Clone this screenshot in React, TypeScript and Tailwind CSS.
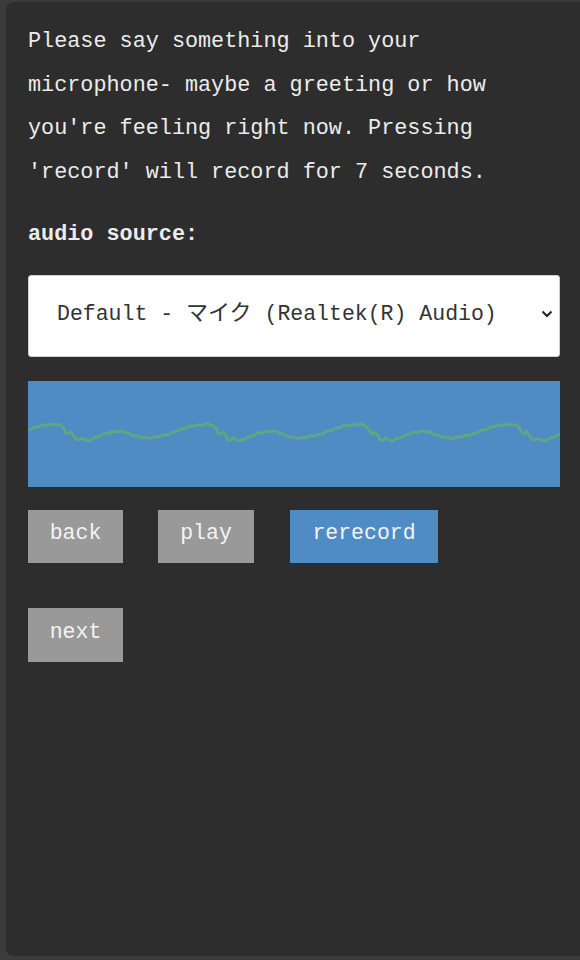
import React from "react";

const keys: [number, number][] = [
  [0, 425], [6, 424], [12, 426], [15, 430], [17, 435], [20, 432], [22, 433],
  [25, 438], [27, 441], [30, 439], [32, 438], [35, 440], [38, 441], [42, 439],
  [47, 437], [52, 435], [57, 433], [63, 432], [70, 431], [75, 432], [80, 434],
  [85, 436], [90, 437], [95, 438], [100, 438], [105, 437], [110, 436], [115, 435],
  [120, 434], [126, 431], [133, 429], [138, 427], [142, 426], [147, 425], [152, 425],
];

function interp(p: number): number {
  for (let i = 0; i < keys.length - 1; i++) {
    const [x0, y0] = keys[i];
    const [x1, y1] = keys[i + 1];
    if (p >= x0 && p <= x1) {
      return y0 + ((y1 - y0) * (p - x0)) / (x1 - x0);
    }
  }
  return 425;
}

function buildPath(): string {
  const pts: string[] = [];
  for (let x = 0; x <= 532; x += 2) {
    const realX = x + 28;
    let p = (realX - 50) % 152;
    if (p < 0) p += 152;
    const noise = Math.sin(x * 1.7) * 0.6 + Math.sin(x * 0.73) * 0.5;
    const y = interp(p) - 381 + noise;
    pts.push(`${x === 0 ? "M" : "L"}${x},${y.toFixed(1)}`);
  }
  return pts.join(" ");
}

const wavePath = buildPath();

const mono = { fontFamily: '"Liberation Mono", "Courier New", "Noto Sans CJK JP", monospace' };

export default function App() {
  return (
    <div className="w-[580px] h-[960px] bg-[#3b3b3b] pl-[6px] pt-[2px] overflow-hidden" style={mono}>
      <div className="h-[954px] bg-[#2d2d2d] rounded-l-[8px] pl-[22px] pr-[20px] pt-[18px] text-[#ececec]">
        <p className="text-[21.8px] leading-[43.6px] w-[540px]">
          Please say something into your microphone- maybe a greeting or how you're feeling right now. Pressing 'record' will record for 7 seconds.
        </p>
        <p className="mt-[19px] text-[21.8px] leading-[43.6px] font-bold">audio source:</p>
        <div className="mt-[18px] w-[532px] h-[82px] bg-white rounded-[3px] border border-[#d0d0d0] flex items-center justify-between pl-[28px] pr-[6px] text-[#333333]">
          <span className="text-[21.5px] whitespace-nowrap leading-[24px] mb-[8px]">
            Default - <span className="text-[22px]" style={{ fontFamily: '"Noto Sans CJK JP", sans-serif' }}>マイク</span> (Realtek(R) Audio)
          </span>
          <svg width="12" height="8" viewBox="0 0 12 8" className="mb-[4px]">
            <path d="M1.5 1.5 L6 6 L10.5 1.5" fill="none" stroke="#222" strokeWidth="2" />
          </svg>
        </div>
        <div className="mt-[24px] w-[532px] h-[106px] bg-[#4f8cc4]">
          <svg width="532" height="106" viewBox="0 0 532 106">
            <path d={wavePath} fill="none" stroke="#62a97c" strokeWidth="2.8" strokeLinejoin="round" strokeOpacity="0.9" />
          </svg>
        </div>
        <div className="mt-[23px] flex">
          <button className="w-[95px] h-[53px] bg-[#999999] text-[#f4f4f4] text-[21.5px] pb-[6px]" style={mono}>back</button>
          <button className="ml-[35px] w-[96px] h-[53px] bg-[#999999] text-[#f4f4f4] text-[21.5px] pb-[6px]" style={mono}>play</button>
          <button className="ml-[36px] w-[148px] h-[53px] bg-[#4f8cc4] text-[#f4f4f4] text-[21.5px] pb-[6px]" style={mono}>rerecord</button>
        </div>
        <div className="mt-[45px]">
          <button className="w-[95px] h-[54px] bg-[#999999] text-[#f4f4f4] text-[21.5px] pb-[6px]" style={mono}>next</button>
        </div>
      </div>
    </div>
  );
}
